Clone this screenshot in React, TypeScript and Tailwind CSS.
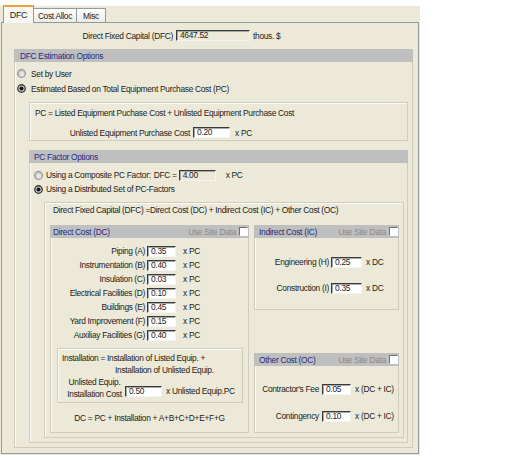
import React from "react";
import clsx from "clsx";

const FONT = "font-['Liberation_Sans',Arial,sans-serif]";

function Field({ v, cls, dis }: { v: string; cls: string; dis?: boolean }) {
  return (
    <div
      className={clsx(
        "h-[11px] shrink-0 border border-[#f4f4f2] border-t-[#3a3a3a] border-l-[#3a3a3a] shadow-[inset_1px_1px_0_#a8a8a8] pl-[3px] flex items-center leading-none text-[#222]",
        dis ? "bg-[#ece9d8]" : "bg-white",
        cls
      )}
    >
      {v}
    </div>
  );
}

function Radio({ on }: { on?: boolean }) {
  return (
    <svg width="9" height="9" viewBox="0 0 9 9" className="shrink-0">
      {on ? (
        <>
          <circle cx="4.5" cy="4.5" r="4.4" fill="#3a3a3a" />
          <circle cx="4.5" cy="4.5" r="3.1" fill="#c9c9c9" />
          <circle cx="4.5" cy="4.5" r="2" fill="#141414" />
        </>
      ) : (
        <>
          <circle cx="4.5" cy="4.5" r="4.4" fill="#8a8a8a" />
          <circle cx="4.5" cy="4.5" r="3.4" fill="#c4c4c4" />
          <circle cx="4.9" cy="4.9" r="2.5" fill="#e4e4e4" />
        </>
      )}
    </svg>
  );
}

function Check() {
  return (
    <div className="ml-[3px] w-[9px] h-[9px] shrink-0 border border-[#fafafa] border-t-[#6e6e6e] border-l-[#6e6e6e] bg-white" />
  );
}

function Header({
  title,
  pl,
  site,
}: {
  title: string;
  pl: string;
  site?: boolean;
}) {
  return (
    <div
      className={clsx(
        "-mx-px -mt-px h-[13px] shrink-0 bg-[#bfbfbf] flex items-center pr-px whitespace-nowrap",
        pl
      )}
    >
      <span className="text-[#1f2a86]">{title}</span>
      {site && (
        <>
          <span className="ml-auto text-[#8a8a8a]">Use Site Data</span>
          <Check />
        </>
      )}
    </div>
  );
}

const GROUP = "border border-[#cfccbc] shadow-[inset_1px_1px_0_#fbfaf6]";

const dcRows: [string, string][] = [
  ["Piping (A)", "0.35"],
  ["Instrumentation (B)", "0.40"],
  ["Insulation (C)", "0.03"],
  ["Electrical Facilities (D)", "0.10"],
  ["Buildings (E)", "0.45"],
  ["Yard Improvement (F)", "0.15"],
  ["Auxiliay Facilities (G)", "0.40"],
];

export default function App() {
  return (
    <div
      className={clsx(
        "w-[506px] h-[460px] bg-white text-[8.4px] tracking-[-0.3px] leading-[12px] text-[#1c1c1c] whitespace-nowrap",
        FONT
      )}
    >
      <div className="mt-[6px] w-[420px] h-[449px] bg-[#ece9d8] pl-px">
        {/* tabs */}
        <div className="flex items-end h-[16px] pl-[2px]">
          <div className="relative z-10 -mb-px h-[18px] w-[31px] border border-b-0 border-[#919b9c] border-t-2 border-t-[#f0a23a] bg-[#f9f8f3] flex items-center justify-center pb-px text-[9px]">
            DFC
          </div>
          <div className="h-[14px] w-[43px] border border-b-0 border-l-0 border-[#919b9c] bg-linear-to-b from-white to-[#ecebe4] flex items-center justify-center">
            Cost Alloc
          </div>
          <div className="h-[14px] w-[29px] border border-b-0 border-l-0 border-[#919b9c] bg-linear-to-b from-white to-[#ecebe4] flex items-center justify-center">
            Misc
          </div>
        </div>

        {/* panel */}
        <div className="w-[418px] border border-[#919b9c] bg-[#ece9d8] pt-[7px] pb-[5px] flex flex-col">
          <div className="flex items-center h-[11px]">
            <div className="w-[171px] text-right">Direct Fixed Capital (DFC)</div>
            <Field v="4647.52" cls="ml-[3px] w-[74px]" dis />
            <span className="ml-[3px]">thous. $</span>
          </div>

          {/* DFC Estimation Options */}
          <div className={clsx("mt-[8px] ml-[12px] w-[399px] pb-[4px] flex flex-col", GROUP)}>
            <Header title="DFC Estimation Options" pl="pl-[6px]" />
            <div className="mt-[4px] h-[15px] flex items-center pl-[2px]">
              <Radio />
              <span className="ml-[5px]">Set by User</span>
            </div>
            <div className="h-[15px] flex items-center pl-[2px]">
              <Radio on />
              <span className="ml-[5px]">
                Estimated Based on Total Equipment Purchase Cost (PC)
              </span>
            </div>

            {/* PC box */}
            <div className={clsx("mt-[6px] ml-[14px] w-[379px] h-[39px] flex flex-col", GROUP)}>
              <div className="mt-[4px] h-[12px] pl-[5px] flex items-center">
                PC = Listed Equipment Puchase Cost + Unlisted Equipment Purchase Cost
              </div>
              <div className="mt-[8px] h-[11px] flex items-center">
                <div className="w-[160px] text-right">Unlisted Equipment Purchase Cost</div>
                <Field v="0.20" cls="ml-[3px] w-[37px]" />
                <span className="ml-[5px]">x PC</span>
              </div>
            </div>

            {/* PC Factor Options */}
            <div className={clsx("mt-[9px] ml-[14px] w-[379px] pb-[4px] flex flex-col", GROUP)}>
              <Header title="PC Factor Options" pl="pl-[5px]" />
              <div className="mt-[5px] h-[14px] flex items-center pl-[4px]">
                <Radio />
                <span className="ml-[3px]">Using a Composite PC Factor:</span>
                <span className="ml-[3px]">DFC =</span>
                <Field v="4.00" cls="ml-[2px] w-[37px]" dis />
                <span className="ml-[10px]">x PC</span>
              </div>
              <div className="h-[14px] flex items-center pl-[4px]">
                <Radio on />
                <span className="ml-[3px]">Using a Distributed Set of PC-Factors</span>
              </div>

              {/* inner box */}
              <div className={clsx("mt-[6px] ml-[14px] w-[360px] pb-[4px] flex flex-col", GROUP)}>
                <div className="mt-px h-[12px] pl-[8px] flex items-center">
                  Direct Fixed Capital (DFC) =Direct Cost (DC) + Indirect Cost (IC) + Other Cost (OC)
                </div>
                <div className="mt-[9px] ml-[5px] flex gap-[5px]">
                  {/* Direct cost */}
                  <div className={clsx("w-[199px] h-[208px] flex flex-col", GROUP)}>
                    <Header title="Direct Cost (DC)" pl="pl-[3px]" site />
                    <div className="mt-[6px] flex flex-col">
                      {dcRows.map(([l, v]) => (
                        <div key={l} className="h-[14px] flex items-center">
                          <div className="w-[94px] text-right">{l}</div>
                          <Field v={v} cls="ml-[2px] w-[29px] h-[10px]" />
                          <span className="ml-[7px]">x PC</span>
                        </div>
                      ))}
                    </div>
                    <div className={clsx("mt-[6px] ml-[6px] w-[186px] h-[55px] flex flex-col", GROUP)}>
                      <div className="mt-[3px] h-[12px] pl-[4px] flex items-center">
                        Installation = Installation of Listed Equip. +
                      </div>
                      <div className="h-[12px] pl-[57px] flex items-center">
                        Installation of Unlisted Equip.
                      </div>
                      <div className="flex items-start">
                        <div className="ml-[8px] w-[57px] text-center leading-[12px]">
                          Unlisted Equip.
                          <br />
                          Installation Cost
                        </div>
                        <Field v="0.50" cls="mt-[10px] ml-[2px] w-[37px] h-[10px]" />
                        <span className="ml-[4px] mt-[9px]">x Unlisted Equip.PC</span>
                      </div>
                    </div>
                    <div className="mt-[9px] h-[12px] flex items-center justify-center">
                      DC = PC + Installation + A+B+C+D+E+F+G
                    </div>
                  </div>

                  {/* right column */}
                  <div className="w-[145px] h-[208px] flex flex-col justify-between">
                    <div className={clsx("h-[85px] flex flex-col", GROUP)}>
                      <Header title="Indirect Cost (IC)" pl="pl-[5px]" site />
                      <div className="mt-[17px] h-[14px] flex items-center">
                        <div className="w-[74px] text-right">Engineering (H)</div>
                        <Field v="0.25" cls="ml-[2px] w-[31px] h-[10px]" />
                        <span className="ml-[4px]">x DC</span>
                      </div>
                      <div className="mt-[12px] h-[14px] flex items-center">
                        <div className="w-[74px] text-right">Construction (I)</div>
                        <Field v="0.35" cls="ml-[2px] w-[31px] h-[10px]" />
                        <span className="ml-[4px]">x DC</span>
                      </div>
                    </div>
                    <div className={clsx("h-[80px] flex flex-col", GROUP)}>
                      <Header title="Other Cost (OC)" pl="pl-[5px]" site />
                      <div className="mt-[16px] h-[14px] flex items-center">
                        <div className="w-[64px] text-right">Contractor's Fee</div>
                        <Field v="0.05" cls="ml-[3px] w-[29px] h-[10px]" />
                        <span className="ml-[4px]">x (DC + IC)</span>
                      </div>
                      <div className="mt-[13px] h-[14px] flex items-center">
                        <div className="w-[64px] text-right">Contingency</div>
                        <Field v="0.10" cls="ml-[3px] w-[29px] h-[10px]" />
                        <span className="ml-[4px]">x (DC + IC)</span>
                      </div>
                    </div>
                  </div>
                </div>
              </div>
            </div>
          </div>
        </div>
      </div>
    </div>
  );
}
